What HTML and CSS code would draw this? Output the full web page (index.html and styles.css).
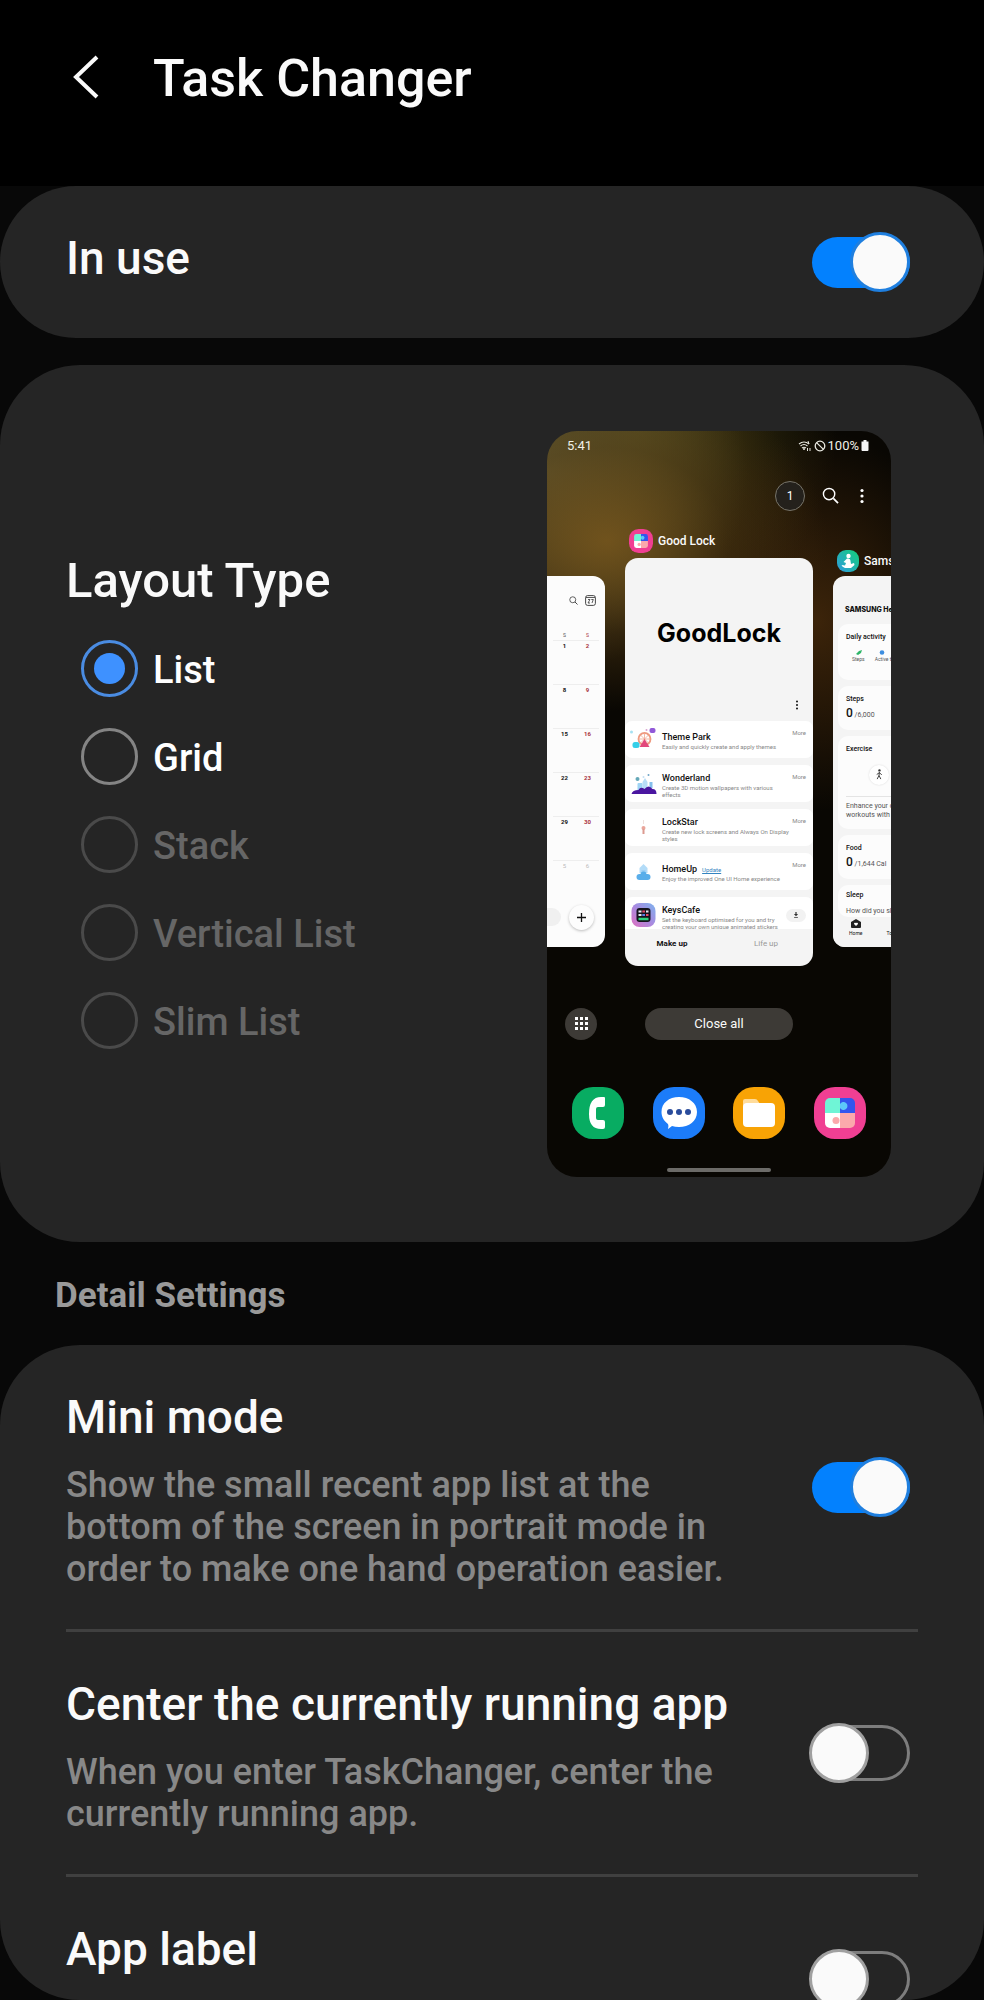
FILE: index.html
```html
<!DOCTYPE html>
<html lang="en">
<head>
    <meta charset="UTF-8">
    <meta name="viewport" content="width=device-width, initial-scale=1.0">
    <title>Task Changer</title>
    <link rel="stylesheet" href="styles.css">
</head>
<body>
    <!-- shared icons -->
    <svg class="sprite" aria-hidden="true">
        <symbol id="icon-goodlock" viewBox="0 0 52 52">
            <rect width="52" height="52" rx="21" fill="#f03f93"/>
            <path d="M16 11H26V26H11V16A5 5 0 0 1 16 11Z" fill="#6ff5d6"/>
            <path d="M26 11H36A5 5 0 0 1 41 16V26H26Z" fill="#3355ee"/>
            <path d="M11 26H26V41H16A5 5 0 0 1 11 36Z" fill="#fff"/>
            <path d="M26 26H41V36A5 5 0 0 1 36 41H26Z" fill="#fba9ac"/>
            <path d="M26 17A4 4 0 1 1 26 21Z" fill="#5cc8fa"/>
            <circle cx="22" cy="33.5" r="3.5" fill="#fba9ac"/>
        </symbol>
        <symbol id="icon-search" viewBox="0 0 18 18">
            <circle cx="7.5" cy="7.5" r="6" fill="none" stroke="currentColor" stroke-width="1.5"/>
            <path d="M12 12L17 17" fill="none" stroke="currentColor" stroke-width="1.8"/>
        </symbol>
        <symbol id="icon-more" viewBox="0 0 4 16">
            <circle cx="2" cy="2.5" r="1.6" fill="currentColor"/>
            <circle cx="2" cy="8" r="1.6" fill="currentColor"/>
            <circle cx="2" cy="13.5" r="1.6" fill="currentColor"/>
        </symbol>
    </svg>

    <header class="header">
        <button class="back" type="button" aria-label="Back">
            <svg viewBox="0 0 28 44"><path d="M25 2L4 22L25 42" fill="none" stroke="#fafafa" stroke-width="4"/></svg>
        </button>
        <h1>Task Changer</h1>
    </header>

    <main class="content">
        <section class="card in-use">
            <label class="row-title" for="inUse">In use</label>
            <input class="toggle" type="checkbox" id="inUse" checked>
        </section>

        <section class="card layout">
            <fieldset class="layout-type">
                <legend>Layout Type</legend>
                <div class="options">
                    <label class="option"><input type="radio" name="layout" checked>List</label>
                    <label class="option"><input type="radio" name="layout">Grid</label>
                    <label class="option disabled"><input type="radio" name="layout" disabled>Stack</label>
                    <label class="option disabled"><input type="radio" name="layout" disabled>Vertical List</label>
                    <label class="option disabled"><input type="radio" name="layout" disabled>Slim List</label>
                </div>
            </fieldset>

            <!-- phone preview -->
            <div class="phone">
                <div class="status-bar">
                    <span>5:41</span>
                    <div class="status-icons">
                        <svg class="wifi" viewBox="0 0 14 12">
                            <g fill="none" stroke="#e8e8e0" stroke-width="1.2">
                                <path d="M1 4Q6 0 11 4"/>
                                <path d="M2.5 6Q6 3 9.5 6"/>
                                <path d="M4 8Q6 6.5 8 8"/>
                            </g>
                            <circle cx="6" cy="9" r="1" fill="#e8e8e0"/>
                            <path d="M10 1L11 4M9.500 11V8M12 8V11" stroke="#e8e8e0" fill="none"/>
                        </svg>
                        <svg class="blocked" viewBox="0 0 12 12">
                            <circle cx="6" cy="6" r="4.8" fill="none" stroke="#e8e8e0" stroke-width="1.3"/>
                            <path d="M2.6 2.6L9.4 9.4" stroke="#e8e8e0" stroke-width="1.3"/>
                        </svg>
                        <span>100%</span>
                        <svg class="battery" viewBox="0 0 8 11"><path d="M2.5 0H5.5V1.5H7.5V10A1 1 0 0 1 6.5 11H1.5A1 1 0 0 1 .5 10V1.5H2.5Z" fill="#f4f4f4"/></svg>
                    </div>
                </div>

                <div class="toolbar">
                    <span class="count">1</span>
                    <svg class="tool-search"><use href="#icon-search"/></svg>
                    <svg class="tool-more"><use href="#icon-more"/></svg>
                </div>

                <div class="recents">
                    <div class="task side">
                        <div class="window calendar">
                            <div class="calendar-tools">
                                <svg class="mini-search"><use href="#icon-search"/></svg>
                                <svg class="today" viewBox="0 0 11 11">
                                    <rect x=".6" y=".6" width="9.8" height="9.8" rx="2" fill="none" stroke="#333" stroke-width=".9"/>
                                    <path d="M1 2.5H10M3 4.5H5L3 8H5M6.3 4.5H8.3L7 8" fill="none" stroke="#333" stroke-width=".8"/>
                                </svg>
                            </div>
                            <table class="days">
                                <thead>
                                    <tr><th>S</th><th class="sun">S</th></tr>
                                </thead>
                                <tbody>
                                    <tr><td>1</td><td class="sun">2</td></tr>
                                    <tr><td>8</td><td class="sun">9</td></tr>
                                    <tr><td>15</td><td class="sun">16</td></tr>
                                    <tr><td>22</td><td class="sun">23</td></tr>
                                    <tr><td>29</td><td class="sun">30</td></tr>
                                    <tr class="next"><td>5</td><td>6</td></tr>
                                </tbody>
                            </table>
                            <div class="calendar-actions">
                                <span class="event-box"></span>
                                <span class="add">
                                    <svg viewBox="0 0 9 9"><path d="M4.5 0V9M0 4.5H9" stroke="#111" stroke-width="1.3"/></svg>
                                </span>
                            </div>
                        </div>
                    </div>

                    <div class="task main">
                        <div class="task-label">
                            <svg class="task-icon"><use href="#icon-goodlock"/></svg>
                            <span>Good Lock</span>
                        </div>
                        <div class="window goodlock">
                            <div class="logo">GoodLock</div>
                            <svg class="menu"><use href="#icon-more"/></svg>
                            <ul class="modules">
                                <li>
                                    <svg viewBox="0 0 28 24">
                                        <circle cx="15" cy="12" r="6" fill="none" stroke="#ee9a80" stroke-width="1.8"/>
                                        <path d="M15 6V18M9 12H21M11 8L19 16M19 8L11 16" stroke="#f0a78f" stroke-width=".8"/>
                                        <path d="M15 12L20 20H10Z" fill="#e2477b"/>
                                        <rect x="3" y="15" width="7" height="6" rx="2.5" fill="#35cfe8"/>
                                        <rect x="20" y="1" width="6" height="5" rx="2" fill="#9158d8"/>
                                        <circle cx="2" cy="5" r="1.5" fill="#a6e1f2"/>
                                        <circle cx="17" cy="3" r="1" fill="#d9a2cf"/>
                                    </svg>
                                    <div class="module-text"><strong>Theme Park</strong><p>Easily and quickly create and apply themes</p></div>
                                    <a href="#">More</a>
                                </li>
                                <li>
                                    <svg viewBox="0 0 28 24">
                                        <rect x="8" y="12" width="5" height="8" rx="1" fill="#9fd4f4"/>
                                        <path d="M13 19V11L15.5 7L18 11V19Z" fill="#b8ddf7"/>
                                        <rect x="20" y="11" width="3" height="6" fill="#85bfec"/>
                                        <path d="M2 23Q3 19 9 19Q11 15 15 18Q19 13 23 18Q27 18 27 23Z" fill="#4a16a0"/>
                                        <circle cx="8" cy="8" r="2" fill="#64a8b8"/>
                                        <circle cx="19" cy="4" r="1" fill="#6fa4c6"/>
                                        <circle cx="14" cy="6" r="1" fill="#c4dff2"/>
                                    </svg>
                                    <div class="module-text"><strong>Wonderland</strong><p>Create 3D motion wallpapers with various effects</p></div>
                                    <a href="#">More</a>
                                </li>
                                <li>
                                    <svg viewBox="0 0 28 24">
                                        <path d="M14 5V9" stroke="#eee0dc" stroke-width="1"/>
                                        <circle cx="14" cy="13" r="2" fill="#e9a59a"/>
                                        <rect x="13" y="14" width="2" height="5" fill="#dc9a90"/>
                                    </svg>
                                    <div class="module-text"><strong>LockStar</strong><p>Create new lock screens and Always On Display styles</p></div>
                                    <a href="#">More</a>
                                </li>
                                <li>
                                    <svg viewBox="0 0 28 24">
                                        <path d="M10 14V9L14 5L18 9V14Z" fill="#b3dcf8"/>
                                        <path d="M12 12H16" stroke="#88c3f0"/>
                                        <rect x="7" y="15" width="14" height="6" rx="3" fill="#59aeea"/>
                                        <circle cx="14" cy="15.5" r="3" fill="#59aeea"/>
                                    </svg>
                                    <div class="module-text"><strong>HomeUp</strong><a class="update" href="#">Update</a><p>Enjoy the improved One UI Home experience</p></div>
                                    <a href="#">More</a>
                                </li>
                                <li>
                                    <svg viewBox="0 0 28 24">
                                        <defs>
                                            <linearGradient id="keys" x1="0" y1="1" x2="1" y2="0">
                                                <stop offset="0" stop-color="#df70c0"/>
                                                <stop offset=".5" stop-color="#a88ae0"/>
                                                <stop offset="1" stop-color="#7db4ee"/>
                                            </linearGradient>
                                        </defs>
                                        <rect x="2" y="0" width="24" height="24" rx="8" fill="url(#keys)"/>
                                        <rect x="7" y="5" width="14" height="14" rx="3" fill="#15131c"/>
                                        <path d="M9 8.5H12M16.5 8.5H19M9 12H12" stroke="#e6e6f2" stroke-width="2"/>
                                        <path d="M12.8 8.5H15.5M16.5 12H19" stroke="#e14b68" stroke-width="2"/>
                                        <path d="M12.8 12H15.5" stroke="#5b82e8" stroke-width="2"/>
                                        <path d="M9 16H19" stroke="#2fd27c" stroke-width="2.5"/>
                                    </svg>
                                    <div class="module-text"><strong>KeysCafe</strong><p>Set the keyboard optimised for you and try creating your own unique animated stickers</p></div>
                                    <span class="download">
                                        <svg viewBox="0 0 8 8"><path d="M3.2 0H4.8V2.6H6.8L4 5.8L1.2 2.6H3.2Z" fill="#333"/><path d="M1.5 7.3H6.5" stroke="#333"/></svg>
                                    </span>
                                </li>
                            </ul>
                            <div class="tabs"><b>Make up</b><span>Life up</span></div>
                        </div>
                    </div>

                    <div class="task side">
                        <div class="task-label">
                            <svg class="task-icon" viewBox="0 0 22 22">
                                <defs>
                                    <linearGradient id="health" x1="0" y1="1" x2="1" y2="0">
                                        <stop offset="0" stop-color="#2f9be0"/>
                                        <stop offset="1" stop-color="#12cf78"/>
                                    </linearGradient>
                                </defs>
                                <rect width="22" height="22" rx="9" fill="url(#health)"/>
                                <circle cx="11.5" cy="6" r="2.2" fill="#fff"/>
                                <path d="M10 8.5Q13.5 8 13.5 11L14 14L17 13L17.5 15L14 18H8Q5 17 4.5 15L8 15.5L9 13L6.5 12Z" fill="#fff"/>
                            </svg>
                            <span>Samsung Health</span>
                        </div>
                        <div class="window health">
                            <div class="brand">SAMSUNG Health</div>
                            <div class="tile activity">
                                <h4>Daily activity</h4>
                                <div class="activity-icons">
                                    <span><svg viewBox="0 0 6 5"><path d="M0 4L3 1L6 0L5 3L2 5Z" fill="#2eb568"/></svg>Steps</span>
                                    <span><svg viewBox="0 0 6 5"><circle cx="3" cy="2.5" r="2.3" fill="#3d8ee0"/></svg>Active time</span>
                                </div>
                            </div>
                            <div class="tile">
                                <h4>Steps</h4>
                                <p><b>0</b> /6,000</p>
                            </div>
                            <div class="tile exercise">
                                <h4>Exercise</h4>
                                <span class="walk">
                                    <svg viewBox="0 0 8 12"><circle cx="4.5" cy="1.5" r="1.3" fill="#333"/><path d="M4.5 3.5L4 7L6 11M4 7L2 11M1.5 6L4.5 4L7 6.5" fill="none" stroke="#333" stroke-width="1"/></svg>
                                </span>
                                <p>Enhance your outdoor<br>workouts with music</p>
                            </div>
                            <div class="tile">
                                <h4>Food</h4>
                                <p><b>0</b> /1,644 Cal</p>
                            </div>
                            <div class="tile sleep">
                                <h4>Sleep</h4>
                                <p>How did you sleep?</p>
                            </div>
                            <div class="health-nav">
                                <span>
                                    <svg viewBox="0 0 10 9"><path d="M5 0L10 3V8A1 1 0 0 1 9 9H1A1 1 0 0 1 0 8V3Z" fill="#222"/><path d="M5 7L3 5A1.2 1.2 0 0 1 5 4A1.2 1.2 0 0 1 7 5Z" fill="#fff"/></svg>
                                    Home
                                </span>
                                <span>Together</span>
                            </div>
                        </div>
                    </div>
                </div>

                <div class="actions">
                    <span class="apps">
                        <svg viewBox="0 0 13 13"><path d="M0 1.5H13M0 6.5H13M0 11.5H13" stroke="#fff" stroke-width="3" stroke-dasharray="3 2"/></svg>
                    </span>
                    <span class="close-all">Close all</span>
                </div>

                <div class="dock">
                    <svg viewBox="0 0 52 52">
                        <rect width="52" height="52" rx="21" fill="#08ac62"/>
                        <path d="M33 11V18Q33 20 31 20H26Q24 20 24 22V31Q24 33 26 33H31Q33 33 33 35V40Q33 42 31 42H29Q17 42 17 27Q17 10 29 10H32Q33 10 33 11Z" fill="#fff"/>
                    </svg>
                    <svg viewBox="0 0 52 52">
                        <rect width="52" height="52" rx="21" fill="#1c7cf9"/>
                        <path d="M26 10C36 10 44 16 44 25C44 34 36 40 26 40Q22 40 19 39L15 42Q16 39 15 37C11 34 8.5 30 8.5 25C8.5 16 16 10 26 10Z" fill="#fff"/>
                        <circle cx="17" cy="25" r="3" fill="#2a4c9c"/>
                        <circle cx="26" cy="25" r="3" fill="#2a4c9c"/>
                        <circle cx="35" cy="25" r="3" fill="#2a4c9c"/>
                    </svg>
                    <svg viewBox="0 0 52 52">
                        <rect width="52" height="52" rx="21" fill="#f8a305"/>
                        <path d="M10 20V14Q10 12 12 12H22Q24 12 25 14L27 17V20Z" fill="#ffdc9b"/>
                        <rect x="10" y="16" width="32" height="24" rx="4" fill="#fff"/>
                    </svg>
                    <svg><use href="#icon-goodlock"/></svg>
                </div>
                <div class="home-bar"></div>
            </div>
        </section>

        <h2>Detail Settings</h2>

        <section class="card details">
            <div class="row">
                <div class="row-text">
                    <label class="row-title" for="miniMode">Mini mode</label>
                    <p>Show the small recent app list at the bottom of the screen in portrait mode in order to make one hand operation easier.</p>
                </div>
                <input class="toggle" type="checkbox" id="miniMode" checked>
            </div>
            <div class="row">
                <div class="row-text">
                    <label class="row-title" for="centerApp">Center the currently running app</label>
                    <p>When you enter TaskChanger, center the currently running app.</p>
                </div>
                <input class="toggle" type="checkbox" id="centerApp">
            </div>
            <div class="row last">
                <div class="row-text">
                    <label class="row-title" for="appLabel">App label</label>
                </div>
                <input class="toggle" type="checkbox" id="appLabel">
            </div>
        </section>
    </main>
</body>
</html>
```
FILE: styles.css
```css
* {
    margin: 0;
    padding: 0;
    box-sizing: border-box;
}

body {
    height: 100vh;
    display: flex;
    flex-direction: column;
    overflow: hidden;
    background: #080808;
    color: #fafafa;
    font-family: Roboto, sans-serif;
    font-weight: 500;
}

svg {
    display: block;
    flex-shrink: 0;
}

.sprite {
    display: none;
}

/* Header */
.header {
    display: flex;
    align-items: center;
    gap: 49px;
    height: 186px;
    padding: 0 72px 28px;
    background: #000;
}

.back {
    width: 32px;
    height: 44px;
    margin-bottom: 5px;
    border: none;
    background: none;
    cursor: pointer;
}

.back svg {
    width: 28px;
    height: 44px;
}

h1 {
    font-size: 52px;
    line-height: 60px;
    font-weight: 500;
}

.content {
    flex: 1;
    min-height: 0;
    display: flex;
    flex-direction: column;
}

.card {
    flex-shrink: 0;
    border-radius: 80px;
    background: #252525;
}

/* Toggle rows */
.in-use {
    display: flex;
    align-items: center;
    justify-content: space-between;
    height: 152px;
    margin-bottom: 27px;
    padding: 0 66px;
}

.in-use .row-title {
    padding-bottom: 9px;
}

.row-title {
    display: block;
    font-size: 46px;
    line-height: 54px;
}

.toggle {
    appearance: none;
    flex-shrink: 0;
    display: grid;
    align-items: center;
    width: 101px;
    height: 60px;
    margin-right: 8px;
    cursor: pointer;
}

.toggle::before,
.toggle::after {
    content: "";
    grid-area: 1 / 1;
    box-sizing: border-box;
}

.toggle::before {
    height: 56px;
    margin-left: 3px;
    border: 3px solid #7d7d7d;
    border-radius: 28px;
}

.toggle::after {
    width: 60px;
    height: 60px;
    border: 3px solid #a0a0a0;
    border-radius: 50%;
    background: #fafafa;
}

.toggle:checked::before {
    height: 51px;
    border: none;
    background: #0381fe;
}

.toggle:checked::after {
    justify-self: end;
    border-color: #1f7fdf;
}

/* Layout type */
.layout {
    display: flex;
    align-items: center;
    justify-content: space-between;
    height: 877px;
    padding: 0 93px 0 66px;
}

.layout-type {
    border: none;
    padding-bottom: 3px;
}

legend {
    margin-bottom: 30px;
    font-size: 49px;
    line-height: 58px;
}

.options {
    display: flex;
    flex-direction: column;
    gap: 28px;
    padding-left: 15px;
}

.option {
    display: flex;
    align-items: flex-start;
    gap: 15px;
    color: #fff;
    font-size: 38px;
    line-height: 60px;
}

.option input {
    appearance: none;
    display: grid;
    place-items: center;
    width: 57px;
    height: 57px;
    border: 3px solid #848484;
    border-radius: 50%;
}

.option input:checked {
    border-color: #4a8ce2;
}

.option input:checked::before {
    content: "";
    width: 31px;
    height: 31px;
    border-radius: 50%;
    background: #3e91ff;
}

.option.disabled {
    color: #666;
}

.option.disabled input {
    border-color: #4a4a4a;
}

/* Phone preview */
.phone {
    display: flex;
    flex-direction: column;
    width: 344px;
    height: 746px;
    overflow: hidden;
    border-radius: 30px;
    background:
        radial-gradient(ellipse 220px 170px at 60px 110px, rgba(116, 84, 28, 0.9), rgba(80, 56, 18, 0.5) 55%, transparent),
        radial-gradient(circle 200px at 0 40px, #655f36, transparent),
        radial-gradient(ellipse 150px 190px at 270px 190px, #3c240a, transparent),
        radial-gradient(circle 200px at 90px 0, #4a4214, transparent),
        #090703;
    font-size: 13px;
    font-weight: 400;
}

.status-bar {
    display: flex;
    justify-content: space-between;
    align-items: center;
    height: 30px;
    padding: 0 22px 0 20px;
    color: #f0f0e8;
}

.status-icons {
    display: flex;
    align-items: center;
    gap: 2px;
    font-size: 13px;
}

.wifi {
    width: 14px;
    height: 12px;
}

.blocked {
    width: 12px;
    height: 12px;
}

.battery {
    width: 8px;
    height: 11px;
}

.toolbar {
    display: flex;
    justify-content: flex-end;
    align-items: center;
    gap: 17px;
    margin: 20px 27px 18px 0;
    color: #fff;
}

.count {
    width: 30px;
    height: 30px;
    border: 1px solid #77746a;
    border-radius: 50%;
    background: #24211c;
    font-size: 12px;
    line-height: 28px;
    text-align: center;
}

.tool-search {
    width: 17px;
    height: 17px;
}

.tool-more {
    width: 4px;
    height: 16px;
    margin-left: 4px;
}

/* Recent apps */
.recents {
    display: grid;
    grid-template-columns: 58px 1fr 58px;
    gap: 20px;
    align-items: end;
    height: 437px;
}

.task {
    min-width: 0;
}

.side {
    margin-bottom: 19px;
}

.task-label {
    display: flex;
    align-items: center;
    gap: 5px;
    padding-left: 4px;
    margin-bottom: 5px;
    font-size: 12px;
    line-height: 24px;
    font-weight: 500;
    white-space: nowrap;
}

.task-icon {
    width: 24px;
    height: 24px;
}

.side .task-label {
    margin-bottom: 4px;
    line-height: 22px;
}

.side .task-icon {
    width: 22px;
    height: 22px;
}

.window {
    display: flex;
    flex-direction: column;
    overflow: hidden;
    height: 408px;
    border-radius: 13px;
    background: #f4f4f4;
    color: #111;
}

.side .window {
    height: 371px;
}

/* Calendar window */
.window.calendar {
    border-radius: 0 12px 12px 0;
    background: #fcfcfc;
}

.calendar-tools {
    display: flex;
    justify-content: flex-end;
    align-items: center;
    gap: 7px;
    height: 54px;
    padding-right: 9px;
    color: #333;
}

.mini-search {
    width: 9px;
    height: 9px;
}

.today {
    width: 11px;
    height: 11px;
}

.days {
    width: 46px;
    margin: 5px 6px 0;
    border-collapse: collapse;
    table-layout: fixed;
    font-size: 6px;
    line-height: 10px;
    text-align: center;
}

.days th {
    color: #555;
    font-size: 5px;
    font-weight: 400;
}

.days td {
    height: 44px;
    border-top: 1px solid #eee;
    font-weight: 700;
    vertical-align: top;
}

.days .sun {
    color: #a8323c;
}

.days .next td {
    color: #bbb;
    font-weight: 400;
}

.calendar-actions {
    display: flex;
    justify-content: space-between;
    align-items: center;
    margin-top: auto;
    padding: 0 11px 17px 0;
}

.event-box {
    width: 14px;
    height: 18px;
    border-radius: 0 9px 9px 0;
    background: #f0f0f0;
}

.add {
    display: grid;
    place-items: center;
    width: 25px;
    height: 25px;
    border-radius: 50%;
    background: #fdfdfd;
    box-shadow: 0 1px 3px rgba(0, 0, 0, 0.25);
}

.add svg {
    width: 9px;
    height: 9px;
}

/* Good Lock window */
.logo {
    padding-top: 60px;
    color: #000;
    font-family: Inter, sans-serif;
    font-size: 25px;
    line-height: 30px;
    font-weight: 700;
    text-align: center;
}

.menu {
    align-self: flex-end;
    width: 4px;
    height: 10px;
    margin: 52px 14px 11px;
}

.modules {
    display: flex;
    flex-direction: column;
    gap: 7px;
    height: 208px;
    overflow: hidden;
    list-style: none;
}

.modules li {
    flex-shrink: 0;
    display: flex;
    align-items: center;
    gap: 4px;
    height: 37px;
    padding: 0 7px 0 4px;
    border-radius: 7px;
    background: #fff;
}

.modules li > svg {
    width: 29px;
    height: 24px;
}

.module-text {
    flex: 1;
    padding-right: 4px;
}

.module-text strong {
    font-size: 9px;
    line-height: 11px;
    font-weight: 500;
}

.module-text p {
    width: 130px;
    color: #888;
    font-size: 6px;
    line-height: 7px;
}

.modules a {
    color: #888;
    font-size: 6px;
    text-decoration: none;
}

.modules li > a {
    align-self: flex-start;
    margin-left: -20px;
    padding-top: 8px;
}

.modules .update {
    margin-left: 5px;
    color: #3484c0;
    text-decoration: underline;
}

.download {
    display: grid;
    place-items: center;
    width: 20px;
    height: 13px;
    margin-left: -20px;
    border-radius: 7px;
    background: #f2f2f2;
}

.download svg {
    width: 6px;
    height: 6px;
}

.modules li:last-child p {
    width: 116px;
}

.tabs {
    display: grid;
    grid-template-columns: 1fr 1fr;
    font-size: 8px;
    line-height: 29px;
    text-align: center;
}

.tabs span {
    color: #999;
}

/* Health window */
.window.health {
    border-radius: 12px 0 0 12px;
    white-space: nowrap;
}

.brand {
    height: 48px;
    padding: 29px 0 0 12px;
    font-family: Inter, sans-serif;
    font-size: 7px;
    line-height: 10px;
    font-weight: 800;
}

.tile {
    flex-shrink: 0;
    height: 44px;
    margin: 0 0 6px 5px;
    padding: 8px 0 0 8px;
    border-radius: 10px 0 0 10px;
    background: #fcfcfc;
    font-size: 7px;
    line-height: 9px;
}

.tile h4 {
    font-size: 7px;
    line-height: 10px;
    font-weight: 500;
}

.tile p {
    color: #555;
}

.tile b {
    color: #111;
    font-size: 12px;
    line-height: 18px;
    font-weight: 500;
}

.activity {
    height: 56px;
}

.activity-icons {
    display: flex;
    gap: 10px;
    padding: 8px 0 0 6px;
    color: #555;
    font-size: 5px;
}

.activity-icons svg {
    width: 6px;
    height: 5px;
    margin-left: 4px;
}

.exercise {
    height: 93px;
}

.walk {
    display: grid;
    place-items: center;
    width: 20px;
    height: 20px;
    margin: 11px 0 11px 23px;
    border-radius: 50%;
    background: #fff;
    box-shadow: 0 0 2px rgba(0, 0, 0, 0.15);
}

.walk svg {
    width: 8px;
    height: 11px;
}

.exercise p {
    padding-top: 5px;
    border-top: 1px solid #e4e4e4;
}

.sleep {
    height: 32px;
    margin-bottom: 0;
    padding-top: 5px;
    overflow: hidden;
}

.sleep p {
    padding-top: 7px;
}

.health-nav {
    flex: 1;
    display: flex;
    align-items: flex-end;
    gap: 24px;
    padding: 0 0 10px 16px;
    background: #f4f4f4;
    font-size: 5px;
    line-height: 8px;
}

.health-nav svg {
    width: 10px;
    height: 9px;
    margin: 0 0 1px 2px;
}

/* Bottom of the phone */
.actions {
    display: flex;
    gap: 48px;
    margin-top: 42px;
    padding-left: 18px;
}

.apps {
    display: grid;
    place-items: center;
    width: 32px;
    height: 32px;
    border-radius: 50%;
    background: #3d3a36;
}

.apps svg {
    width: 13px;
    height: 13px;
}

.close-all {
    width: 148px;
    border-radius: 16px;
    background: #3d3a36;
    line-height: 32px;
    text-align: center;
}

.dock {
    display: flex;
    justify-content: space-between;
    margin-top: 47px;
    padding: 0 25px;
}

.dock svg {
    width: 52px;
    height: 52px;
}

.home-bar {
    width: 104px;
    height: 4px;
    margin: 29px auto 0;
    border-radius: 2px;
    background: #6c6b68;
}

/* Detail settings */
h2 {
    padding: 33px 55px 28px;
    color: #999;
    font-size: 35px;
    line-height: 42px;
    font-weight: 700;
}

.details {
    flex: 1;
    min-height: 0;
    overflow: hidden;
    padding: 0 66px;
}

.row {
    display: flex;
    align-items: center;
    justify-content: space-between;
    padding: 45px 0 39px;
    border-bottom: 3px solid #404040;
}

.row .toggle {
    margin-bottom: 6px;
}

.row-text {
    flex: 1;
    max-width: 680px;
}

.row p {
    margin-top: 20px;
    color: #888;
    font-size: 36px;
    line-height: 42px;
}

.row.last {
    height: 203px;
    border-bottom: none;
}

.row.last .row-text {
    align-self: flex-start;
}
```
